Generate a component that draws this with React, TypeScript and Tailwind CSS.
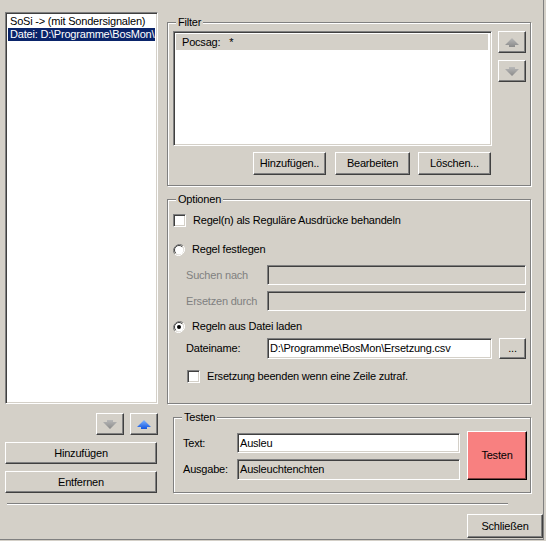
import type { ReactNode } from 'react';

// Classic Win32 look: raised buttons, sunken fields, etched group boxes
const raised =
  'bg-[#d4d0c8] border border-t-white border-l-white border-r-[#404040] border-b-[#404040] shadow-[inset_-1px_-1px_0_#808080]';
const sunken =
  'border border-t-[#808080] border-l-[#808080] border-r-white border-b-white shadow-[inset_1px_1px_0_#404040,inset_-1px_-1px_0_#d4d0c8]';

function Button({ className = '', children }: { className?: string; children?: ReactNode }) {
  return (
    <button className={`${raised} flex items-center justify-center text-black ${className}`}>
      {children}
    </button>
  );
}

function GroupBox({ title, className = '', children }: { title: string; className?: string; children?: ReactNode }) {
  return (
    <div
      className={`relative border border-[#808080] shadow-[inset_1px_1px_0_#fff,1px_1px_0_#fff] ${className}`}
    >
      <span className="absolute -top-[7px] left-[8px] bg-[#d4d0c8] px-[2px] leading-[13px]">{title}</span>
      {children}
    </div>
  );
}

function Checkbox() {
  return <div className={`${sunken} w-[13px] h-[13px] bg-white shrink-0`} />;
}

function Radio({ checked = false }: { checked?: boolean }) {
  return (
    <svg width="12" height="12" viewBox="0 0 12 12" className="shrink-0">
      <path d="M10.2 1.8 A6 6 0 0 0 1.8 10.2" fill="none" stroke="#808080" strokeWidth="1" />
      <path d="M1.8 10.2 A6 6 0 0 0 10.2 1.8" fill="none" stroke="#ffffff" strokeWidth="1" />
      <circle cx="6" cy="6" r="4.5" fill="#ffffff" />
      <path d="M9.2 2.8 A4.5 4.5 0 0 0 2.8 9.2" fill="none" stroke="#404040" strokeWidth="1" />
      {checked && <circle cx="6" cy="6" r="2" fill="#000" />}
    </svg>
  );
}

function Arrow({ dir, active = false }: { dir: 'up' | 'down'; active?: boolean }) {
  const up = '7,0 14,7 10,7 10,9 4,9 4,7 0,7';
  const down = '4,0 10,0 10,2 14,2 7,9 0,2 4,2';
  const id = active ? 'arrowBlue' : 'arrowGray';
  return (
    <svg width="14" height="9" viewBox="0 0 14 9">
      <defs>
        <linearGradient id="arrowBlue" x1="0" y1="0" x2="0" y2="1">
          <stop offset="0" stopColor="#7fb4ff" />
          <stop offset="1" stopColor="#1255e0" />
        </linearGradient>
        <linearGradient id="arrowGray" x1="0" y1="0" x2="0" y2="1">
          <stop offset="0" stopColor="#b8b8b8" />
          <stop offset="1" stopColor="#8a8a8a" />
        </linearGradient>
      </defs>
      <polygon points={dir === 'up' ? up : down} fill={`url(#${id})`} />
    </svg>
  );
}

export default function App() {
  return (
    <div className="w-[546px] h-[541px] bg-[#d4d0c8] font-['Liberation_Sans',Arial,sans-serif] text-[11px] leading-[13px] tracking-[-0.2px] text-black">
      <div className="w-[544px] h-[540px] border-r border-b border-[#808080] flex flex-col">
        <div className="flex pl-[5px] pt-[12px]">
          {/* rule list */}
          <div className="w-[153px] flex flex-col">
            <div className={`${sunken} bg-white h-[392px] p-[2px] overflow-hidden`}>
              <div className="h-[13px] pl-[2px] whitespace-nowrap">SoSi -&gt; (mit Sondersignalen)</div>
              <div className="h-[13px] pl-[2px] whitespace-nowrap bg-[#0a246a] text-white overflow-hidden">
                Datei: D:\Programme\BosMon\Ersetzung.csv
              </div>
            </div>
            <div className="flex justify-end gap-[6px] mt-[9px]">
              <Button className="w-[28px] h-[22px]">
                <Arrow dir="down" />
              </Button>
              <Button className="w-[28px] h-[22px]">
                <Arrow dir="up" active />
              </Button>
            </div>
            <Button className="w-[152px] h-[22px] mt-[7px]">Hinzufügen</Button>
            <Button className="w-[152px] h-[22px] mt-[7px]">Entfernen</Button>
          </div>

          <div className="ml-[9px] w-[364px] pt-[10px] flex flex-col">
            <GroupBox title="Filter" className="h-[164px] pl-[5px] pt-[8px] flex">
              <div className="w-[319px] flex flex-col">
                <div className={`${sunken} bg-white h-[115px] p-[2px]`}>
                  <div className="h-[16px] bg-[#d4d0c8] flex items-center pl-[6px] mr-[1px] gap-[9px]">
                    <span>Pocsag:</span>
                    <span>*</span>
                  </div>
                </div>
                <div className="flex justify-end mt-[6px] pr-[1px]">
                  <Button className="w-[73px] h-[23px]">Hinzufügen..</Button>
                  <Button className="w-[75px] h-[23px] ml-[9px]">Bearbeiten</Button>
                  <Button className="w-[73px] h-[23px] ml-[8px]">Löschen...</Button>
                </div>
              </div>
              <div className="ml-[6px] flex flex-col gap-[7px]">
                <Button className="w-[28px] h-[22px]">
                  <Arrow dir="up" />
                </Button>
                <Button className="w-[28px] h-[22px]">
                  <Arrow dir="down" />
                </Button>
              </div>
            </GroupBox>

            <GroupBox title="Optionen" className="h-[205px] mt-[13px] pl-[5px] pt-[14px] flex flex-col">
              <div className="flex items-center h-[13px]">
                <Checkbox />
                <span className="ml-[7px]">Regel(n) als Reguläre Ausdrücke behandeln</span>
              </div>
              <div className="flex items-center h-[13px] mt-[16px]">
                <Radio />
                <span className="ml-[7px]">Regel festlegen</span>
              </div>
              <div className="flex items-center h-[20px] mt-[9px] pl-[13px]">
                <span className="w-[81px] text-[#808080]">Suchen nach</span>
                <div className={`${sunken} w-[259px] h-[20px] bg-[#d4d0c8]`} />
              </div>
              <div className="flex items-center h-[20px] mt-[6px] pl-[13px]">
                <span className="w-[81px] text-[#808080]">Ersetzen durch</span>
                <div className={`${sunken} w-[259px] h-[20px] bg-[#d4d0c8]`} />
              </div>
              <div className="flex items-center h-[13px] mt-[9px]">
                <Radio checked />
                <span className="ml-[7px]">Regeln aus Datei laden</span>
              </div>
              <div className="flex items-center h-[21px] mt-[5px] pl-[13px]">
                <span className="w-[81px]">Dateiname:</span>
                <div className={`${sunken} w-[225px] h-[21px] bg-white flex items-center pl-[2px]`}>
                  D:\Programme\BosMon\Ersetzung.csv
                </div>
                <Button className="w-[27px] h-[21px] ml-[7px]">...</Button>
              </div>
              <div className="flex items-center h-[13px] mt-[11px] pl-[14px]">
                <Checkbox />
                <span className="ml-[7px]">Ersetzung beenden wenn eine Zeile zutraf.</span>
              </div>
            </GroupBox>

            <GroupBox title="Testen" className="w-[358px] h-[76px] ml-[6px] mt-[13px] pl-[9px] pt-[13px] flex">
              <div className="flex flex-col mt-[2px] gap-[6px]">
                <div className="flex items-center h-[20px]">
                  <span className="w-[54px]">Text:</span>
                  <div className={`${sunken} w-[223px] h-[20px] bg-white flex items-center pl-[2px]`}>Ausleu</div>
                </div>
                <div className="flex items-center h-[21px]">
                  <span className="w-[54px]">Ausgabe:</span>
                  <div className={`${sunken} w-[223px] h-[21px] bg-[#d4d0c8] flex items-center pl-[2px]`}>
                    Ausleuchtenchten
                  </div>
                </div>
              </div>
              <button className="ml-[7px] w-[60px] h-[49px] flex items-center justify-center bg-[#f88080] border border-t-white border-l-white border-r-black border-b-black shadow-[inset_-1px_-1px_0_#7c4040]">
                Testen
              </button>
            </GroupBox>
          </div>
        </div>

        <div className="ml-[7px] mt-[10px] w-[501px] h-[2px] border-t border-t-[#808080] border-b border-b-white" />

        <div className="flex justify-end mt-[9px]">
          <Button className="w-[76px] h-[24px]">Schließen</Button>
        </div>
      </div>
    </div>
  );
}
